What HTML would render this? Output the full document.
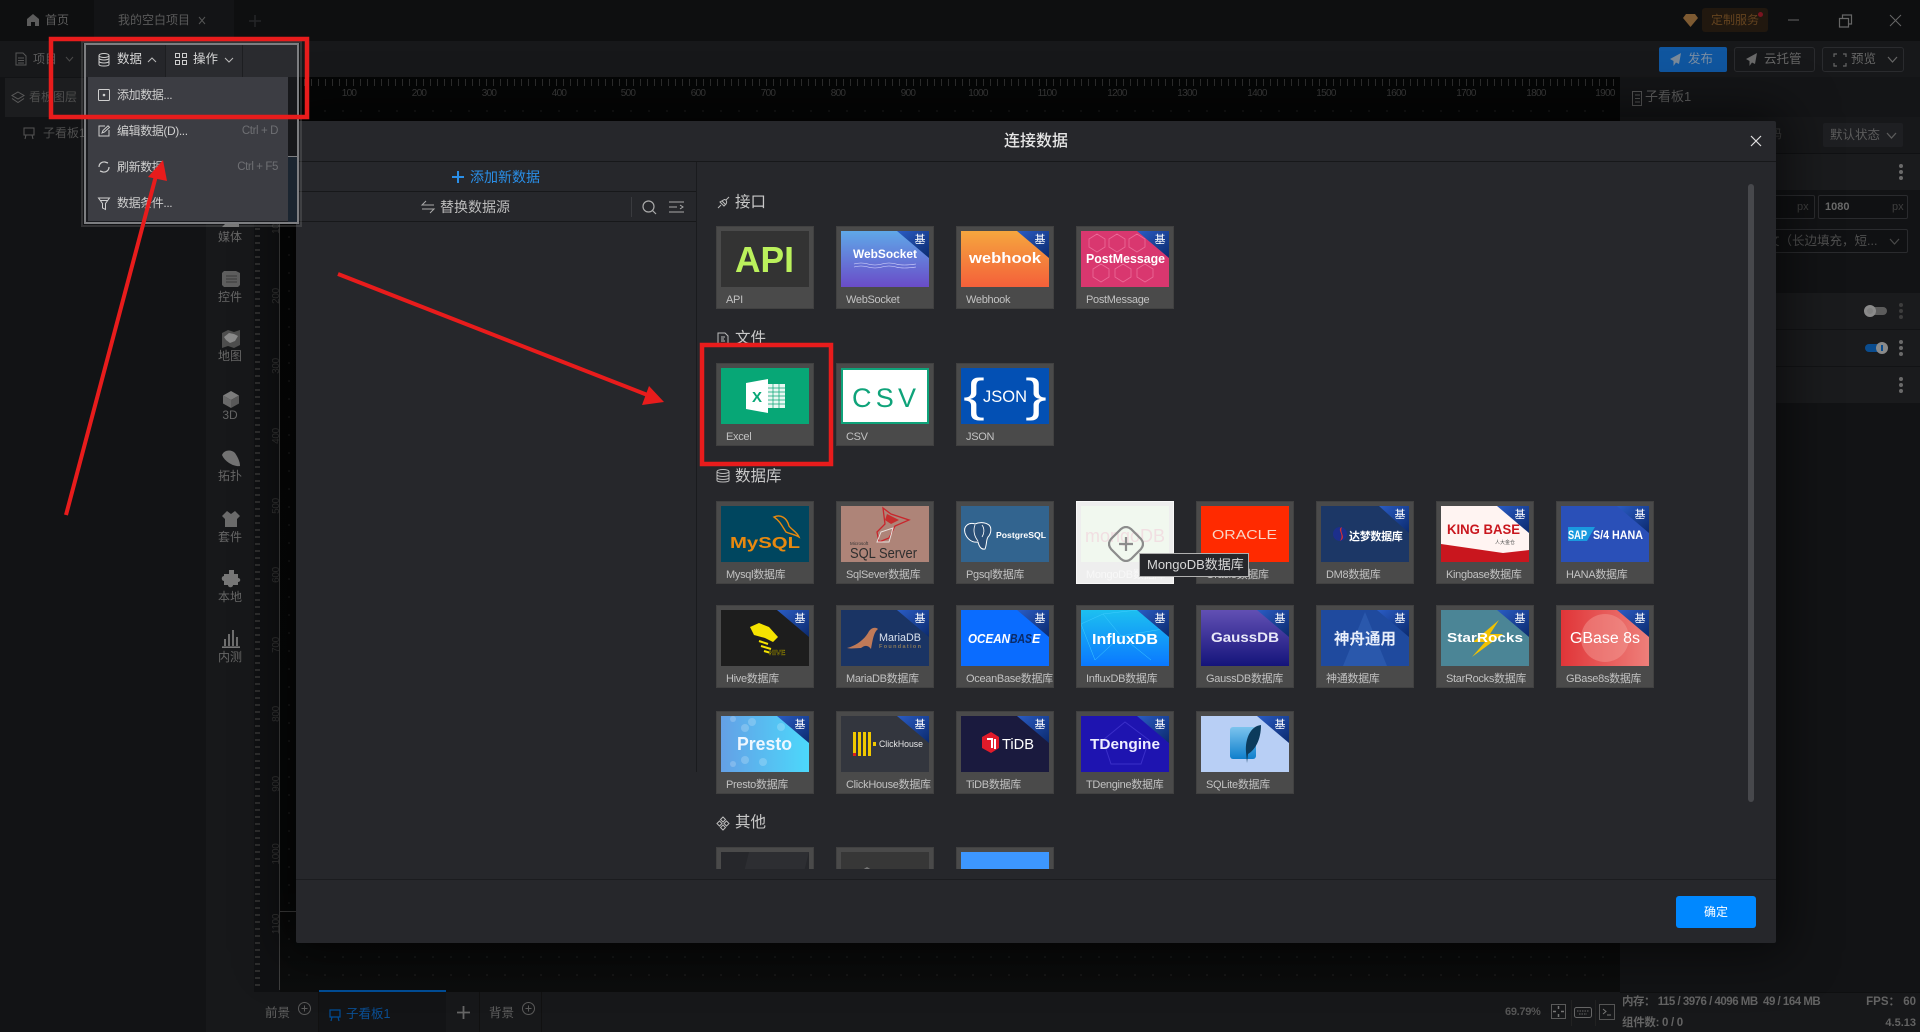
<!DOCTYPE html>
<html lang="zh"><head><meta charset="utf-8"><title>连接数据</title>
<style>
*{box-sizing:border-box;margin:0;padding:0}
html,body{width:1920px;height:1032px;overflow:hidden;background:#0a0b0c}
body{position:relative;font-family:"Liberation Sans","Noto Sans CJK SC",sans-serif;font-size:12px;color:#666}
.a{position:absolute;white-space:nowrap}
svg{position:absolute;overflow:visible}
.rl{position:absolute;top:88px;font-size:10px;letter-spacing:-.7px;color:#3c3c3c;width:30px;text-align:center}
.vl{position:absolute;left:262px;font-size:10px;letter-spacing:-.3px;color:#333;width:30px;height:12px;line-height:12px;text-align:center;transform:rotate(-90deg)}
.side{position:absolute;left:206px;width:48px;text-align:center;font-size:12px;line-height:16px;color:#666}
.mi{position:absolute;left:117px;font-size:12px;line-height:16px;color:#cfcfcf;white-space:nowrap;letter-spacing:-.4px}
.sc{position:absolute;right:1642px;font-size:11.5px;line-height:16px;color:#6e6f73;white-space:nowrap;letter-spacing:-.4px}
.sh{position:absolute;left:735px;font-size:15.5px;line-height:20px;color:#c8c8c8}
.k{position:absolute;width:98px;height:83px;background:#4a4a4a;border:1px solid #414141}
.k>svg{left:4px;top:4px;width:88px;height:56px;overflow:hidden}
.k>b{position:absolute;left:9px;top:66px;font-size:11px;line-height:14px;font-weight:400;color:#c2c2c2;white-space:nowrap;letter-spacing:-.3px}
.j{fill:url(#jg)}
.jt{font-size:11px;fill:#fff;font-family:"Noto Sans CJK SC",sans-serif}
.r{position:absolute;left:1620px;width:300px;background:#1a1b1d}
.kb{position:absolute;left:1899px;width:4px;height:4px;border-radius:2px;background:#6a6a6a;box-shadow:0 6px 0 #6a6a6a,0 12px 0 #6a6a6a}
</style></head>
<body>
<svg width="0" height="0" style="position:absolute"><defs>
<linearGradient id="jg" x1="0" y1="0" x2="1" y2="1"><stop offset="0" stop-color="#2a5cc4"/><stop offset="1" stop-color="#0b2a6e"/></linearGradient>
<linearGradient id="ws" x1="0" y1="0" x2="0" y2="1"><stop offset="0" stop-color="#5fa8e8"/><stop offset="1" stop-color="#6a4cc8"/></linearGradient>
<linearGradient id="wh" x1="0" y1="0" x2="0" y2="1"><stop offset="0" stop-color="#f5a63e"/><stop offset="1" stop-color="#f4603a"/></linearGradient>
<linearGradient id="if" x1="0" y1="0" x2="0" y2="1"><stop offset="0" stop-color="#1dc0f0"/><stop offset="1" stop-color="#0a78ff"/></linearGradient>
<linearGradient id="ga" x1="0" y1="0" x2="0" y2="1"><stop offset="0" stop-color="#6250b4"/><stop offset="1" stop-color="#14147a"/></linearGradient>
<linearGradient id="gb" x1="0" y1="0" x2="1" y2="0"><stop offset="0" stop-color="#e03538"/><stop offset="1" stop-color="#ee7f7a"/></linearGradient>
<linearGradient id="pr" x1="0" y1="0" x2="1" y2="0"><stop offset="0" stop-color="#64a0e6"/><stop offset="1" stop-color="#4cd8fb"/></linearGradient>
<linearGradient id="sq" x1="0" y1="0" x2="0" y2="1"><stop offset="0" stop-color="#7cc4ee"/><stop offset="1" stop-color="#0f7fcc"/></linearGradient>
</defs></svg>

<!-- title bar -->
<div class="a" style="left:0;top:0;width:1920px;height:41px;background:#0e0f10"></div>
<div class="a" style="left:94px;top:0;width:140px;height:41px;background:#131416"></div>
<svg style="left:26px;top:13px" width="14" height="14" viewBox="0 0 14 14"><path d="M7 1 L13 6 V13 H9 V9 H5 V13 H1 V6 Z" fill="#5c5c5c"/></svg>
<div class="a" style="left:45px;top:12px;line-height:16px;color:#5e5e5e">首页</div>
<div class="a" style="left:118px;top:12px;line-height:16px;color:#5a5a5a">我的空白项目</div>
<svg style="left:198px;top:16px" width="8" height="9"><path d="M1 1 L7 8 M7 1 L1 8" stroke="#555" fill="none"/></svg>
<svg style="left:249px;top:15px" width="12" height="12"><path d="M6 0 V12 M0 6 H12" stroke="#252628" stroke-width="1.5"/></svg>
<svg style="left:1683px;top:13px" width="15" height="14"><path d="M3 1 H12 L15 5 L7.500 14 L0 5 Z" fill="#7d5a32"/></svg>
<div class="a" style="left:1702px;top:8px;width:66px;height:24px;background:#21180f;border-radius:3px;color:#64431f;line-height:24px;padding-left:9px;font-size:12px">定制服务</div>
<div class="a" style="left:1758px;top:12px;width:5px;height:5px;border-radius:50%;background:#7a1420"></div>
<svg style="left:1788px;top:19px" width="12" height="2"><path d="M0 1 H11" stroke="#666"/></svg>
<svg style="left:1838px;top:14px" width="15" height="14"><path d="M1.500 4.500 H10.500 V13 H1.500 Z M4.500 4 V1 H13.500 V10 H11" stroke="#666" fill="none" stroke-width="1.200"/></svg>
<svg style="left:1889px;top:14px" width="13" height="13"><path d="M1 1 L12 12 M12 1 L1 12" stroke="#666" fill="none"/></svg>

<!-- toolbar -->
<div class="a" style="left:0;top:41px;width:1920px;height:36px;background:#17181a"></div>
<svg style="left:15px;top:52px" width="12" height="14"><path d="M1 1 H8 L11 4 V13 H1 Z M3 6 H9 M3 8.500 H9 M3 11 H9" stroke="#565656" fill="none"/></svg>
<div class="a" style="left:33px;top:51px;line-height:16px;color:#5c5c5c">项目</div>
<svg style="left:65px;top:56px" width="9" height="6"><path d="M1 1 L4.500 5 L8 1" stroke="#4a4a4a" fill="none"/></svg>
<div class="a" style="left:1659px;top:47px;width:68px;height:25px;background:#10569f;border-radius:2px;color:#7b8ea3;line-height:25px;padding-left:29px;font-size:12.500px">发布</div>
<svg style="left:1670px;top:53px" width="12" height="13"><path d="M11 0 L0 6 L3.500 8 L3.500 13 L6 9.500 L9 11 Z" fill="#7a8a9a"/></svg>
<div class="a" style="left:1734px;top:47px;width:81px;height:25px;border:1px solid #2a2b2e;border-radius:3px;color:#666;line-height:23px;padding-left:29px;font-size:12.500px">云托管</div>
<svg style="left:1746px;top:53px" width="12" height="13"><path d="M11 0 L0 6 L3.500 8 L3.500 13 L6 9.500 L9 11 Z" fill="#6a6a6a"/></svg>
<div class="a" style="left:1822px;top:47px;width:82px;height:25px;border:1px solid #2a2b2e;border-radius:3px;color:#666;line-height:23px;padding-left:28px;font-size:12.500px">预览</div>
<svg style="left:1834px;top:54px" width="12" height="12"><path d="M0 3 V0 H3 M9 0 H12 V3 M12 9 V12 H9 M3 12 H0 V9" stroke="#666" fill="none" stroke-width="1.200"/></svg>
<svg style="left:1887px;top:56px" width="11" height="7"><path d="M1 1 L5.500 6 L10 1" stroke="#666" fill="none" stroke-width="1.200"/></svg>

<!-- left panel -->
<div class="a" style="left:0;top:77px;width:206px;height:955px;background:#121315"></div>
<div class="a" style="left:5px;top:78px;width:85px;height:39px;background:#1c1d1f"></div>
<svg style="left:11px;top:91px" width="14" height="13"><path d="M7 1 L13 4.500 L7 8 L1 4.500 Z M1 7.500 L7 11.500 L13 7.500" stroke="#5a5a5a" fill="none"/></svg>
<div class="a" style="left:29px;top:89px;line-height:16px;color:#4e4e4e">看板图层</div>
<svg style="left:23px;top:127px" width="12" height="13"><path d="M1 1 H11 V8 H1 Z M3 8 L2 12 M9 8 L10 12" stroke="#555" fill="none"/></svg>
<div class="a" style="left:43px;top:125px;line-height:16px;color:#4f4f4f">子看板1</div>

<!-- sidebar -->
<div class="a" style="left:206px;top:77px;width:48px;height:955px;background:#17181a"></div>
<svg style="left:222px;top:221px" width="17" height="6"><path d="M0 6 L4 2 L7 3 L12 0 L17 1 V6 Z" fill="#777"/></svg>
<div class="side" style="top:229px">媒体</div>
<svg style="left:222px;top:271px" width="18" height="16"><path d="M2 0 H14 L18 2 V14 L16 16 H2 L0 14 V2 Z" fill="#5e5e5e"/><path d="M4 5 H15 M4 8 H15 M4 11 H15" stroke="#3a3a3a"/></svg>
<div class="side" style="top:289px">控件</div>
<svg style="left:222px;top:330px" width="18" height="18"><path d="M0 3 L6 0 L12 2 L18 0 V15 L12 18 L6 16 L0 18 Z" fill="#4e4e4e"/><path d="M2 7 L7 3 L12 4 L16 6 L13 11 L8 13 L4 10 Z" fill="#8a8a8a"/></svg>
<div class="side" style="top:348px">地图</div>
<svg style="left:223px;top:391px" width="16" height="17"><path d="M8 0 L16 4.500 L8 9 L0 4.500 Z" fill="#7d7d7d"/><path d="M0 4.500 L8 9 V17 L0 12.500 Z" fill="#6a6a6a"/><path d="M16 4.500 L8 9 V17 L16 12.500 Z" fill="#5a5a5a"/></svg>
<div class="side" style="top:407px">3D</div>
<svg style="left:222px;top:450px" width="18" height="17"><path d="M0 5 C2 0 9 -1 13 3 C15 6 18 11 18 16 C12 17 3 12 0 5 Z" fill="#737373"/></svg>
<div class="side" style="top:468px">拓扑</div>
<svg style="left:222px;top:511px" width="18" height="16"><path d="M5 0 L9 3 L13 0 L18 5 L15 8 V16 H3 V8 L0 5 Z" fill="#6b6b6b"/></svg>
<div class="side" style="top:529px">套件</div>
<svg style="left:222px;top:570px" width="18" height="17"><path d="M7 0 H12 V4 H16 V8 C19 8 19 12 16 12 V15 H11 C11 18 6 18 6 15 H2 V11 C-1 11 -1 6 2 6 V4 H7 Z" fill="#777"/></svg>
<div class="side" style="top:589px">本地</div>
<svg style="left:222px;top:630px" width="18" height="18"><path d="M2 9 H4 V16 H2 Z M6 4 H8 V16 H6 Z M10 0 H12 V16 H10 Z M14 7 H16 V16 H14 Z" fill="#6e6e6e"/><path d="M0 17.200 H18" stroke="#777" stroke-width="1.600"/></svg>
<div class="side" style="top:649px">内测</div>

<!-- vertical ruler -->
<div class="a" style="left:254px;top:77px;width:26px;height:915px;background:#101113"></div>
<div class="a" style="left:255px;top:81px;width:5px;height:909px;background:repeating-linear-gradient(180deg,#2e2e2e 0 2px,transparent 2px 7px)"></div>
<div class="a" style="left:279px;top:77px;width:1px;height:913px;background:#3e3e3e"></div>
<div class="vl" style="top:220px">100</div><div class="vl" style="top:290px">200</div><div class="vl" style="top:360px">300</div><div class="vl" style="top:430px">400</div><div class="vl" style="top:500px">500</div><div class="vl" style="top:569px">600</div><div class="vl" style="top:639px">700</div><div class="vl" style="top:708px">800</div><div class="vl" style="top:778px">900</div><div class="vl" style="top:848px">1000</div><div class="vl" style="top:918px">1100</div>

<!-- canvas + ruler -->
<div class="a" style="left:280px;top:77px;width:1340px;height:915px;background:linear-gradient(180deg,#050606 0,#060707 88%,#0c0d0d 100%)"></div>
<div class="a" style="left:280px;top:110px;width:1340px;height:882px;background:radial-gradient(circle at 1px 1px,#1c1d1d .7px,transparent 1.100px) 8px 0/18px 18px"></div>
<div class="a" style="left:290px;top:79px;width:1330px;height:7px;background:repeating-linear-gradient(90deg,#2e2e2e 0 1px,transparent 1px 7px)"></div>
<div class="rl" style="left:334px">100</div><div class="rl" style="left:404px">200</div><div class="rl" style="left:474px">300</div><div class="rl" style="left:544px">400</div><div class="rl" style="left:613px">500</div><div class="rl" style="left:683px">600</div><div class="rl" style="left:753px">700</div><div class="rl" style="left:823px">800</div><div class="rl" style="left:893px">900</div><div class="rl" style="left:963px">1000</div><div class="rl" style="left:1032px">1100</div><div class="rl" style="left:1102px">1200</div><div class="rl" style="left:1172px">1300</div><div class="rl" style="left:1242px">1400</div><div class="rl" style="left:1311px">1500</div><div class="rl" style="left:1381px">1600</div><div class="rl" style="left:1451px">1700</div><div class="rl" style="left:1521px">1800</div><div class="rl" style="left:1590px">1900</div>
<div class="a" style="left:280px;top:911px;width:16px;height:1px;background:#3e3e3e"></div>

<!-- right panel -->
<div class="a" style="left:1620px;top:77px;width:300px;height:915px;background:#121315"></div>
<div class="r" style="top:77px;height:40px;background:#141517"></div>
<svg style="left:1632px;top:91px" width="10" height="15"><path d="M.5 .5 H9.500 V14.500 H.5 Z M3 4 H8 M3 7.500 H8 M3 11 H8" stroke="#555" fill="none"/></svg>
<div class="a" style="left:1645px;top:89px;line-height:16px;color:#5f5f5f;font-size:13px">子看板1</div>
<div class="r" style="top:117px;height:36px;background:#17181a"></div>
<div class="a" style="left:1770px;top:126px;line-height:16px;color:#3f3f3f;font-size:12px">码</div>
<div class="a" style="left:1823px;top:123px;width:80px;height:24px;background:#1e1f22;border-radius:2px;line-height:24px;padding-left:7px;color:#5c5c5c;font-size:12.500px">默认状态</div>
<svg style="left:1886px;top:132px" width="11" height="7"><path d="M1 1 L5.500 6 L10 1" stroke="#5c5c5c" fill="none" stroke-width="1.300"/></svg>
<div class="r" style="top:153px;height:37px;background:#1a1b1d;border-top:1px solid #101113"></div>
<div class="kb" style="top:164px"></div>
<div class="a" style="left:1770px;top:195px;width:45px;height:24px;border:1px solid #2a2b2e;border-radius:2px;background:#101113"></div>
<div class="a" style="left:1797px;top:199px;line-height:16px;color:#3f3f3f;font-size:11px">px</div>
<div class="a" style="left:1818px;top:195px;width:90px;height:24px;border:1px solid #2a2b2e;border-radius:2px;background:#101113"></div>
<div class="a" style="left:1825px;top:199px;line-height:16px;color:#6a6a6a;font-weight:700;font-size:11px">1080</div>
<div class="a" style="left:1892px;top:199px;line-height:16px;color:#3f3f3f;font-size:11px">px</div>
<div class="a" style="left:1760px;top:229px;width:148px;height:24px;border:1px solid #2a2b2e;border-radius:2px;background:#101113"></div>
<div class="a" style="left:1767px;top:233px;line-height:16px;color:#4f4f4f;font-size:12.500px">文（长边填充，短...</div>
<svg style="left:1889px;top:238px" width="11" height="7"><path d="M1 1 L5.500 6 L10 1" stroke="#4a4a4a" fill="none" stroke-width="1.200"/></svg>
<div class="r" style="top:293px;height:36px"></div>
<div class="r" style="top:330px;height:36px"></div>
<div class="r" style="top:367px;height:36px"></div>
<div class="a" style="left:1866px;top:307px;width:21px;height:8px;border-radius:4px;background:#5c5c5c"></div>
<div class="a" style="left:1864px;top:305px;width:12px;height:12px;border-radius:50%;background:#808080;border:3px solid #8a8a8a"></div>
<div class="kb" style="top:303px;background:#3d3d3d;box-shadow:0 6px 0 #3d3d3d,0 12px 0 #3d3d3d"></div>
<div class="a" style="left:1865px;top:344px;width:20px;height:8px;border-radius:4px;background:#0a4c8e"></div>
<div class="a" style="left:1876px;top:342px;width:12px;height:12px;border-radius:50%;background:#8a8a8a"></div>
<div class="a" style="left:1881px;top:345px;width:2px;height:6px;background:#0a4c8e"></div>
<div class="kb" style="top:340px"></div>
<div class="kb" style="top:377px"></div>

<!-- bottom bar -->
<div class="a" style="left:254px;top:992px;width:1366px;height:40px;background:#17181a"></div>
<div class="a" style="left:319px;top:990px;width:127px;height:42px;background:#131416;border-top:2px solid #004e98"></div>
<div class="a" style="left:318px;top:992px;width:1px;height:40px;background:#111"></div>
<div class="a" style="left:479px;top:992px;width:1px;height:40px;background:#111"></div>
<div class="a" style="left:541px;top:992px;width:1px;height:40px;background:#111"></div>
<div class="a" style="left:265px;top:1005px;line-height:16px;color:#5f5f5f;font-size:12.500px">前景</div>
<svg style="left:298px;top:1002px" width="13" height="13"><circle cx="6.500" cy="6.500" r="6" stroke="#5a5a5a" fill="none"/><path d="M6.500 3.500 V9.500 M3.500 6.500 H9.500" stroke="#5a5a5a"/></svg>
<svg style="left:329px;top:1009px" width="12" height="13"><path d="M1 1 H11 V8 H1 Z M3 8 L2 12 M9 8 L10 12" stroke="#004e98" fill="none" stroke-width="1.200"/></svg>
<div class="a" style="left:346px;top:1006px;line-height:16px;color:#0a4f94;font-size:12.500px">子看板1</div>
<svg style="left:457px;top:1006px" width="13" height="13"><path d="M6.500 0 V13 M0 6.500 H13" stroke="#666" stroke-width="1.800"/></svg>
<div class="a" style="left:489px;top:1005px;line-height:16px;color:#5f5f5f;font-size:12.500px">背景</div>
<svg style="left:522px;top:1002px" width="13" height="13"><circle cx="6.500" cy="6.500" r="6" stroke="#5a5a5a" fill="none"/><path d="M6.500 3.500 V9.500 M3.500 6.500 H9.500" stroke="#5a5a5a"/></svg>
<div class="a" style="left:1505px;top:1004px;line-height:16px;color:#555;font-weight:700;font-size:11px;letter-spacing:-.3px">69.79%</div>
<svg style="left:1551px;top:1004px" width="15" height="15"><path d="M.5 .5 H14.500 V14.500 H.5 Z" stroke="#5a5a5a" fill="none"/><path d="M7.500 2 V5 M7.500 10 V13 M2 7.500 H5 M10 7.500 H13" stroke="#777" stroke-width="1.500"/></svg>
<div class="a" style="left:1571px;top:1000px;width:1px;height:26px;background:#222"></div>
<svg style="left:1574px;top:1007px" width="18" height="11"><rect x=".5" y=".5" width="17" height="10" rx="2" stroke="#666" fill="none"/><path d="M3 4 H15 M5 7 H13" stroke="#666" stroke-dasharray="1.500 1"/></svg>
<div class="a" style="left:1595px;top:1000px;width:1px;height:26px;background:#222"></div>
<svg style="left:1599px;top:1004px" width="16" height="16"><path d="M.5 .5 H15.500 V15.500 H.5 Z" stroke="#555" fill="none"/><path d="M4 5 L7 7.500 L4 10 M8 11 H12" stroke="#777" fill="none"/></svg>
<div class="a" style="left:1620px;top:992px;width:300px;height:40px;background:#17181a;border-top:1px solid #0e0f10"></div>
<div class="a" style="left:1622px;top:994px;line-height:16px;color:#636363;font-weight:700;font-size:11.500px;letter-spacing:-.5px">内存： 115 / 3976 / 4096 MB&nbsp; 49 / 164 MB</div>
<div class="a" style="left:1622px;top:1015px;line-height:16px;color:#636363;font-weight:700;font-size:11.500px;letter-spacing:-.3px">组件数: 0 / 0</div>
<div class="a" style="right:4px;top:994px;line-height:16px;color:#636363;font-weight:700;font-size:11.500px">FPS： 60</div>
<div class="a" style="right:4px;top:1015px;line-height:16px;color:#636363;font-weight:700;font-size:11px">4.5.13</div>

<!-- modal -->
<div class="a" style="left:296px;top:121px;width:1480px;height:822px;background:#26272b;border-radius:2px;box-shadow:0 0 50px 10px rgba(0,0,0,.55)"></div>
<div class="a" style="left:296px;top:161px;width:1480px;height:1px;background:#17181a"></div>
<div class="a" style="left:296px;top:879px;width:1480px;height:1px;background:#1b1c1f"></div>
<div class="a" style="left:1004px;top:132px;font-size:16px;line-height:20px;color:#e6e6e6;font-weight:500">连接数据</div>
<svg style="left:1750px;top:135px" width="12" height="12"><path d="M1 1 L11 11 M11 1 L1 11" stroke="#e0e0e0" fill="none" stroke-width="1.200"/></svg>
<div class="a" style="left:296px;top:191px;width:400px;height:1px;background:#17181a"></div>
<div class="a" style="left:296px;top:221px;width:400px;height:1px;background:#17181a"></div>
<div class="a" style="left:696px;top:162px;width:1px;height:610px;background:#1a1b1e"></div>
<svg style="left:452px;top:171px" width="12" height="12"><path d="M6 0 V12 M0 6 H12" stroke="#2a8fe8" stroke-width="2"/></svg>
<div class="a" style="left:470px;top:168px;font-size:14px;line-height:18px;color:#2a8fe8">添加新数据</div>
<svg style="left:421px;top:200px" width="14" height="14"><path d="M13 5 H1 L5 1 M1 9 H13 L9 13" stroke="#aaa" fill="none"/></svg>
<div class="a" style="left:440px;top:198px;font-size:14px;line-height:18px;color:#bdbdbd">替换数据源</div>
<div class="a" style="left:631px;top:197px;width:1px;height:20px;background:#3a3b3f"></div>
<svg style="left:642px;top:200px" width="15" height="15"><circle cx="6.500" cy="6.500" r="5.500" stroke="#aaa" fill="none" stroke-width="1.200"/><path d="M10.500 10.500 L14 14" stroke="#aaa" stroke-width="1.200"/></svg>
<svg style="left:669px;top:201px" width="16" height="12"><path d="M0 1 H15 M0 6 H8 M0 11 H15 M11 4 L14 6 L11 8" stroke="#aaa" fill="none"/></svg>
<div class="a" style="left:1748px;top:184px;width:6px;height:618px;background:#47484c;border-radius:3px"></div>

<!-- section heads -->
<div class="a" style="left:0;top:0;width:1920px;height:869px;overflow:hidden">
<svg style="left:717px;top:196px" width="13" height="13"><path d="M1 12 L4 9 M12 1 L9 4 M3 6 L7 10 L9 8 C10.500 6 9 3.500 7.500 3.500 Z M5 5 L8.500 8.500" stroke="#bbb" fill="none"/></svg>
<div class="sh" style="top:193px">接口</div>
<svg style="left:717px;top:332px" width="12" height="13"><path d="M1 1 H8 L11 4 V12 H1 Z" stroke="#bbb" fill="none"/><path d="M4 5 H8 M4 7 H7 M4 9 H8" stroke="#bbb"/></svg>
<div class="sh" style="top:329px">文件</div>
<svg style="left:716px;top:469px" width="14" height="14"><ellipse cx="7" cy="2.500" rx="6" ry="2" stroke="#bbb" fill="none"/><path d="M1 2.500 V11.500 C1 13.500 13 13.500 13 11.500 V2.500 M1 6 C3 8 11 8 13 6 M1 9 C3 11 11 11 13 9" stroke="#bbb" fill="none"/></svg>
<div class="sh" style="top:467px">数据库</div>
<svg style="left:716px;top:816px" width="14" height="15"><path d="M7 1 L9.500 3.500 L7 6 L4.500 3.500 Z M3.500 5 L6 7.500 L3.500 10 L1 7.500 Z M10.500 5 L13 7.500 L10.500 10 L8 7.500 Z M7 9 L9.500 11.500 L7 14 L4.500 11.500 Z" stroke="#bbb" fill="none"/></svg>
<div class="sh" style="top:813px">其他</div>

<!-- row 1 -->
<div class="k" style="left:716px;top:226px"><svg viewBox="0 0 88 56"><rect width="88" height="56" fill="#333"/><text x="14" y="41" font-size="36" font-weight="700" fill="#bbf15c" textLength="59" lengthAdjust="spacingAndGlyphs">API</text></svg><b>API</b></div>
<div class="k" style="left:836px;top:226px"><svg viewBox="0 0 88 56"><rect width="88" height="56" fill="url(#ws)"/><text x="12" y="27" font-size="12" font-weight="700" fill="#fff" textLength="64" lengthAdjust="spacingAndGlyphs">WebSocket</text><path d="M13 33 Q20 31 27 33 T41 33 T55 33 T75 33 M13 36 Q20 34 27 36 T41 36 T55 36 T75 36" stroke="#dcdcff" stroke-width=".6" fill="none"/><path class="j" d="M56 0 H88 V27 Z"/><text class="jt" x="79" y="12" text-anchor="middle">基</text></svg><b>WebSocket</b></div>
<div class="k" style="left:956px;top:226px"><svg viewBox="0 0 88 56"><rect width="88" height="56" fill="url(#wh)"/><text x="8" y="32" font-size="14.500" font-weight="700" fill="#fff" textLength="72" lengthAdjust="spacingAndGlyphs">webhook</text><path class="j" d="M56 0 H88 V27 Z"/><text class="jt" x="79" y="12" text-anchor="middle">基</text></svg><b>Webhook</b></div>
<div class="k" style="left:1076px;top:226px"><svg viewBox="0 0 88 56"><rect width="88" height="56" fill="#d9376f"/><path d="M8 8 L16 3 L24 8 V16 L16 21 L8 16 Z M28 8 L36 3 L44 8 V16 L36 21 L28 16 Z M48 8 L56 3 L64 8 V16 L56 21 L48 16 Z M12 38 L20 33 L28 38 V46 L20 51 L12 46 Z M34 38 L42 33 L50 38 V46 L42 51 L34 46 Z M56 38 L64 33 L72 38 V46 L64 51 L56 46 Z" fill="none" stroke="#ea6c98" stroke-width=".8"/><text x="5" y="32" font-size="13" font-weight="700" fill="#fff" textLength="79" lengthAdjust="spacingAndGlyphs">PostMessage</text><path class="j" d="M56 0 H88 V27 Z"/><text class="jt" x="79" y="12" text-anchor="middle">基</text></svg><b>PostMessage</b></div>

<!-- row 2 -->
<div class="k" style="left:716px;top:363px"><svg viewBox="0 0 88 56"><rect width="88" height="56" fill="#07a776"/><path d="M25 15 L47 11 V45 L25 41 Z" fill="#fff"/><path d="M47 16 H64 V40 H47 Z" fill="#e8f7f2"/><path d="M47 20 H64 M47 24 H64 M47 28 H64 M47 32 H64 M47 36 H64 M52 16 V40 M58 16 V40" stroke="#07a776" stroke-width=".7"/><text x="36" y="34" text-anchor="middle" font-size="15" font-weight="700" fill="#07a776">X</text></svg><b>Excel</b></div>
<div class="k" style="left:836px;top:363px"><svg viewBox="0 0 88 56"><rect width="88" height="56" fill="#0fa37a"/><rect x="2" y="2" width="84" height="52" fill="#fff"/><text x="11" y="39" font-size="27" fill="#0fa37a" textLength="64">CSV</text></svg><b>CSV</b></div>
<div class="k" style="left:956px;top:363px"><svg viewBox="0 0 88 56"><rect width="88" height="56" fill="#0350b4"/><text x="22" y="34" font-size="17" fill="#fff" textLength="44" lengthAdjust="spacingAndGlyphs">JSON</text><text transform="translate(13 43) scale(1.4 1)" text-anchor="middle" font-size="46" fill="#fff">{</text><text transform="translate(75 43) scale(1.4 1)" text-anchor="middle" font-size="46" fill="#fff">}</text></svg><b>JSON</b></div>

<!-- DB row 1 -->
<div class="k" style="left:716px;top:501px"><svg viewBox="0 0 88 56"><rect width="88" height="56" fill="#00465f"/><text x="9" y="42" font-size="16" font-weight="700" fill="#e8890f" textLength="70" lengthAdjust="spacingAndGlyphs">MySQL</text><path d="M53 11 C60 8 66 12 68 20 C71 24 76 26 78 31 C73 28 69 28 65 26 C61 20 59 15 53 11 Z" fill="none" stroke="#e8890f" stroke-width="1.400"/></svg><b>Mysql数据库</b></div>
<div class="k" style="left:836px;top:501px"><svg viewBox="0 0 88 56"><rect width="88" height="56" fill="#ae8478"/><path d="M42 2 L50 8 L68 14 L54 20 L48 32 L38 36 L36 26 L44 18 Z" fill="none" stroke="#c8262c" stroke-width="1.300"/><path d="M46 8 L58 14 L50 18 L44 14 Z" fill="#c62e2e"/><path d="M40 26 L52 22 L48 36 L36 36 Z" fill="none" stroke="#e6e0dc"/><text x="9" y="39" font-size="4.500" fill="#333">Microsoft</text><text x="9" y="52" font-size="14.500" fill="#2e2e2e" textLength="67" lengthAdjust="spacingAndGlyphs">SQL Server</text></svg><b>SqlSever数据库</b></div>
<div class="k" style="left:956px;top:501px"><svg viewBox="0 0 88 56"><rect width="88" height="56" fill="#32648f"/><path d="M4 27 C2 20 8 16 14 18 C18 16 24 16 28 19 C31 22 30 28 27 31 C25 34 26 38 24 43 C20 44 18 40 17 36 C11 37 6 33 4 27 Z" fill="#2a4f77" stroke="#fff" stroke-width="1"/><path d="M14 19 C12 24 13 30 17 35 M21 19 C24 23 23 28 21 31" stroke="#fff" fill="none" stroke-width=".8"/><text x="35" y="32" font-size="8.500" font-weight="700" fill="#fff" textLength="50" lengthAdjust="spacingAndGlyphs">PostgreSQL</text></svg><b>Pgsql数据库</b></div>
<div class="k" style="left:1076px;top:501px;background:#eeeeee;border-color:#f8f8f8"><svg viewBox="0 0 88 56"><rect width="88" height="56" fill="#f1f8ef"/><text x="44" y="36" text-anchor="middle" font-size="18" fill="#f1dfe2">mongoDB</text></svg><b style="color:#f8f8f8">MongoDB数据库</b>
<svg style="left:31px;top:24px;width:36px;height:36px" viewBox="0 0 36 36"><path d="M13 3 Q18 -1 23 3 L33 13 Q37 18 33 23 L23 33 Q18 37 13 33 L3 23 Q-1 18 3 13 Z" fill="none" stroke="#8c8c8c" stroke-width="2.200"/><path d="M18 11 V25 M11 18 H25" stroke="#8c8c8c" stroke-width="2.200"/></svg></div>
<div class="k" style="left:1196px;top:501px"><svg viewBox="0 0 88 56"><rect width="88" height="56" fill="#ff2a00"/><text x="11" y="33" font-size="13" fill="#f8d4c6" textLength="65" lengthAdjust="spacingAndGlyphs">ORACLE</text></svg><b>Oracle数据库</b></div>
<div class="k" style="left:1316px;top:501px"><svg viewBox="0 0 88 56"><rect width="88" height="56" fill="#1c3766"/><circle cx="19" cy="28" r="7" fill="#1c2f8c"/><path d="M21 21 C15 24 24 28 19 35 C26 31 18 27 21 21 Z" fill="#d92f2f"/><text x="28" y="34" font-size="11" font-weight="700" fill="#fff" font-family="Noto Sans CJK SC,sans-serif" letter-spacing="-.3">达梦数据库</text><path class="j" d="M58 0 H88 V27 Z"/><text class="jt" x="79" y="12" text-anchor="middle">基</text></svg><b>DM8数据库</b></div>
<div class="k" style="left:1436px;top:501px"><svg viewBox="0 0 88 56"><rect width="88" height="56" fill="#fff4f2"/><path d="M0 38 L62 47 L88 44 V56 H0 Z" fill="#c9161e"/><text x="6" y="28" font-size="13.500" font-weight="700" fill="#c9161e" textLength="73" lengthAdjust="spacingAndGlyphs">KING BASE</text><text x="64" y="38" text-anchor="middle" font-size="5" fill="#555" font-family="Noto Sans CJK SC,sans-serif">人大金仓</text><path class="j" d="M56 0 H88 V27 Z"/><text class="jt" x="79" y="12" text-anchor="middle">基</text></svg><b>Kingbase数据库</b></div>
<div class="k" style="left:1556px;top:501px"><svg viewBox="0 0 88 56"><rect width="88" height="56" fill="#2a50b8"/><path d="M7 21 H34 L26 35 H7 Z" fill="#1a9adf"/><text x="7" y="33" font-size="11.500" font-weight="700" fill="#fff" textLength="19" lengthAdjust="spacingAndGlyphs">SAP</text><text x="32" y="33" font-size="12" font-weight="700" fill="#fff" textLength="50" lengthAdjust="spacingAndGlyphs">S/4 HANA</text><path class="j" d="M56 0 H88 V27 Z"/><text class="jt" x="79" y="12" text-anchor="middle">基</text></svg><b>HANA数据库</b></div>

<!-- DB row 2 -->
<div class="k" style="left:716px;top:605px"><svg viewBox="0 0 88 56"><rect width="88" height="56" fill="#1d1d1d"/><path d="M29 17 L38 13 L48 17 L57 27 L52 32 L44 28 L33 25 Z" fill="#f5e300"/><path d="M38 31 L47 34 M40 36 L50 39 M43 41 L50 43" stroke="#f5e300" stroke-width="2"/><text x="48" y="45" font-size="7" font-weight="700" fill="#111" stroke="#b8a800" stroke-width=".3">HIVE</text><path class="j" d="M56 0 H88 V27 Z"/><text class="jt" x="79" y="12" text-anchor="middle">基</text></svg><b>Hive数据库</b></div>
<div class="k" style="left:836px;top:605px"><svg viewBox="0 0 88 56"><rect width="88" height="56" fill="#1a3464"/><path d="M6 38 C14 36 22 31 27 23 C30 17 35 17 37 19 C33 22 32 28 30 39 C27 35 24 35 20 38 C15 38 10 39 6 38 Z" fill="#c07a58"/><text x="38" y="31" font-size="11" fill="#dce3ee" textLength="42" lengthAdjust="spacingAndGlyphs">MariaDB</text><text x="38" y="38" font-size="5.500" font-weight="700" fill="#8a7a5a" textLength="42">Foundation</text><path class="j" d="M56 0 H88 V27 Z"/><text class="jt" x="79" y="12" text-anchor="middle">基</text></svg><b>MariaDB数据库</b></div>
<div class="k" style="left:956px;top:605px"><svg viewBox="0 0 88 56"><rect width="88" height="56" fill="#0a6cff"/><text x="7" y="33" font-size="12.500" font-weight="700" font-style="italic" fill="#fff" textLength="42" lengthAdjust="spacingAndGlyphs">OCEAN</text><text x="49" y="33" font-size="12.500" font-weight="700" font-style="italic" fill="#0b2a66" textLength="22" lengthAdjust="spacingAndGlyphs">BAS</text><text x="71" y="33" font-size="12.500" font-weight="700" font-style="italic" fill="#fff">E</text><path class="j" d="M56 0 H88 V27 Z"/><text class="jt" x="79" y="12" text-anchor="middle">基</text></svg><b>OceanBase数据库</b></div>
<div class="k" style="left:1076px;top:605px"><svg viewBox="0 0 88 56"><rect width="88" height="56" fill="url(#if)"/><path d="M0 14 L22 4 L40 26 L14 50 L0 14 M40 26 L70 50 M22 4 L56 0 M40 26 L88 18" stroke="#3ecbff" stroke-width=".5" fill="none"/><text x="11" y="34" font-size="15" font-weight="700" fill="#fff" textLength="66" lengthAdjust="spacingAndGlyphs">InfluxDB</text><path class="j" d="M56 0 H88 V27 Z"/><text class="jt" x="79" y="12" text-anchor="middle">基</text></svg><b>InfluxDB数据库</b></div>
<div class="k" style="left:1196px;top:605px"><svg viewBox="0 0 88 56"><rect width="88" height="56" fill="url(#ga)"/><text x="10" y="32" font-size="14" font-weight="700" fill="#e8e8f8" textLength="68" lengthAdjust="spacingAndGlyphs">GaussDB</text><path class="j" d="M56 0 H88 V27 Z"/><text class="jt" x="79" y="12" text-anchor="middle">基</text></svg><b>GaussDB数据库</b></div>
<div class="k" style="left:1316px;top:605px"><svg viewBox="0 0 88 56"><rect width="88" height="56" fill="#1f4a9e"/><path d="M44 2 L66 56 H22 Z" fill="#2a58ac"/><text x="44" y="34" text-anchor="middle" font-size="15.500" font-weight="700" fill="#e8eefa" font-family="Noto Sans CJK SC,sans-serif">神舟通用</text><path class="j" d="M56 0 H88 V27 Z"/><text class="jt" x="79" y="12" text-anchor="middle">基</text></svg><b>神通数据库</b></div>
<div class="k" style="left:1436px;top:605px"><svg viewBox="0 0 88 56"><rect width="88" height="56" fill="#4b8596"/><path d="M58 10 L32 32 L44 32 L31 47 L62 24 L49 24 Z" fill="#f2c200"/><text x="6" y="32" font-size="12.500" font-weight="700" fill="#fff" textLength="76" lengthAdjust="spacingAndGlyphs">StarRocks</text><path class="j" d="M56 0 H88 V27 Z"/><text class="jt" x="79" y="12" text-anchor="middle">基</text></svg><b>StarRocks数据库</b></div>
<div class="k" style="left:1556px;top:605px"><svg viewBox="0 0 88 56"><rect width="88" height="56" fill="url(#gb)"/><circle cx="44" cy="28" r="24" fill="#f4a09a" opacity=".45"/><text x="9" y="33" font-size="15.500" fill="#fff" textLength="70" lengthAdjust="spacingAndGlyphs">GBase 8s</text><path class="j" d="M56 0 H88 V27 Z"/><text class="jt" x="79" y="12" text-anchor="middle">基</text></svg><b>GBase8s数据库</b></div>

<!-- DB row 3 -->
<div class="k" style="left:716px;top:711px"><svg viewBox="0 0 88 56"><rect width="88" height="56" fill="url(#pr)"/><g fill="#fff" opacity=".2"><circle cx="12" cy="3" r="3"/><circle cx="31" cy="6" r="4"/><circle cx="60" cy="11" r="4"/><circle cx="24" cy="12" r="4"/><circle cx="12" cy="48" r="3"/><circle cx="42" cy="46" r="4"/><circle cx="24" cy="44" r="4"/></g><text x="16" y="34" font-size="18" font-weight="700" fill="#eef7ff" textLength="55" lengthAdjust="spacingAndGlyphs">Presto</text><path class="j" d="M56 0 H88 V27 Z"/><text class="jt" x="79" y="12" text-anchor="middle">基</text></svg><b>Presto数据库</b></div>
<div class="k" style="left:836px;top:711px"><svg viewBox="0 0 88 56"><rect width="88" height="56" fill="#33363e"/><path d="M12 16 H15 V40 H12 Z M17 16 H20 V40 H17 Z M22 16 H25 V40 H22 Z M27 16 H30 V40 H27 Z" fill="#f0c800"/><rect x="12" y="37" width="3" height="3" fill="#d8201c"/><rect x="32" y="26" width="3" height="4" fill="#f0c800"/><text x="38" y="31" font-size="9.500" fill="#e6e6e6" textLength="44" lengthAdjust="spacingAndGlyphs">ClickHouse</text><path class="j" d="M56 0 H88 V27 Z"/><text class="jt" x="79" y="12" text-anchor="middle">基</text></svg><b>ClickHouse数据库</b></div>
<div class="k" style="left:956px;top:711px"><svg viewBox="0 0 88 56"><rect width="88" height="56" fill="#1a1a3e"/><path d="M30 16 L38 21 V32 L30 37 L21 32 V21 Z" fill="#e21b2a"/><path d="M26 23 H31 V32 M34 23 V33" stroke="#fff" stroke-width="2" fill="none"/><text x="41" y="33" font-size="15" fill="#fff" textLength="32" lengthAdjust="spacingAndGlyphs">TiDB</text><path class="j" d="M56 0 H88 V27 Z"/><text class="jt" x="79" y="12" text-anchor="middle">基</text></svg><b>TiDB数据库</b></div>
<div class="k" style="left:1076px;top:711px"><svg viewBox="0 0 88 56"><rect width="88" height="56" fill="#1e14b0"/><path d="M44 6 L68 24 L60 48 L30 48 L22 24 Z" stroke="#3a2fc8" fill="none"/><text x="9" y="33" font-size="15" font-weight="700" fill="#eef" textLength="70" lengthAdjust="spacingAndGlyphs">TDengine</text><path class="j" d="M56 0 H88 V27 Z"/><text class="jt" x="79" y="12" text-anchor="middle">基</text></svg><b>TDengine数据库</b></div>
<div class="k" style="left:1196px;top:711px"><svg viewBox="0 0 88 56"><rect width="88" height="56" fill="#b8cff5"/><rect x="29" y="11" width="26" height="32" rx="3" fill="url(#sq)"/><path d="M60 9 C50 10 44 22 45 36 L46 47 L47 38 C54 34 60 24 60 9 Z" fill="#0c3b5c"/><path class="j" d="M56 0 H88 V27 Z"/><text class="jt" x="79" y="12" text-anchor="middle">基</text></svg><b>SQLite数据库</b></div>

<!-- other row -->
<div class="k" style="left:716px;top:847px"><svg viewBox="0 0 88 56"><rect width="88" height="56" fill="#26272b"/><path d="M14 56 L28 0 H88 L74 56 Z" fill="#2d2e32"/><rect x="32" y="17" width="20" height="6" fill="#6e3a26"/></svg></div>
<div class="k" style="left:836px;top:847px"><svg viewBox="0 0 88 56"><rect width="88" height="56" fill="#373737"/><path d="M18 20 L26 15 L34 20 Z" fill="#777"/><rect x="40" y="17" width="30" height="3" fill="#777"/></svg></div>
<div class="k" style="left:956px;top:847px"><svg viewBox="0 0 88 56"><rect width="88" height="56" fill="#3d97ff"/><path d="M8 20 L14 24 L20 22" stroke="#eaf4ff" stroke-width="1.500" fill="none"/></svg></div>
</div>

<!-- tooltip -->
<div class="a" style="left:1139px;top:553px;width:110px;height:24px;border:1px solid #b0b0b0;font-size:13px;line-height:22px;color:#d8d8d8;padding-left:7px;background:#26272b">MongoDB数据库</div>

<!-- confirm -->
<div class="a" style="left:1676px;top:896px;width:80px;height:32px;background:#0088ff;border-radius:3px;color:#fff;font-size:12px;line-height:32px;text-align:center">确定</div>

<!-- highlighted menu -->
<div class="a" style="left:81px;top:41px;width:221px;height:186px;border:2px solid rgba(130,130,130,.28)"></div>
<div class="a" style="left:84px;top:43px;width:215px;height:181px;border:2px solid #7d7e81;background:#1a1b1f"></div>
<div class="a" style="left:86px;top:45px;width:211px;height:32px;background:#2a2b2f"></div>
<div class="a" style="left:86px;top:45px;width:79px;height:32px;background:#25262a"></div>
<div class="a" style="left:165px;top:45px;width:1px;height:32px;background:#1d1e21"></div>
<div class="a" style="left:242px;top:45px;width:1px;height:32px;background:#1d1e21"></div>
<div class="a" style="left:288px;top:77px;width:9px;height:80px;background:#17181b"></div>
<div class="a" style="left:288px;top:157px;width:9px;height:65px;background:#1b2530"></div>
<div class="a" style="left:288px;top:156px;width:9px;height:1px;background:#7d7e81"></div>
<div class="a" style="left:88px;top:77px;width:200px;height:144px;background:#3c3d43"></div>
<svg style="left:98px;top:53px" width="12" height="14"><ellipse cx="6" cy="2.500" rx="5" ry="2" stroke="#cfcfcf" fill="none"/><path d="M1 2.500 V11.500 C1 13.500 11 13.500 11 11.500 V2.500 M1 5.500 C3 7.500 9 7.500 11 5.500 M1 8.500 C3 10.500 9 10.500 11 8.500" stroke="#cfcfcf" fill="none"/></svg>
<div class="a" style="left:117px;top:51px;line-height:16px;color:#d6d6d6;font-size:12.500px">数据</div>
<svg style="left:147px;top:57px" width="10" height="6"><path d="M1 5 L5 1 L9 5" stroke="#bbb" fill="none"/></svg>
<svg style="left:175px;top:53px" width="12" height="12"><path d="M.5 .5 H4.500 V4.500 H.5 Z M7.500 .5 H11.500 V4.500 H7.500 Z M.5 7.500 H4.500 V11.500 H.5 Z M7.500 7.500 H11.500 V11.500 H7.500 Z" stroke="#cfcfcf" fill="none"/></svg>
<div class="a" style="left:193px;top:51px;line-height:16px;color:#d6d6d6;font-size:12.500px">操作</div>
<svg style="left:224px;top:57px" width="10" height="6"><path d="M1 1 L5 5 L9 1" stroke="#bbb" fill="none"/></svg>
<svg style="left:98px;top:89px" width="12" height="12"><rect x=".5" y=".5" width="11" height="11" rx="1" stroke="#cfcfcf" fill="none"/><circle cx="6" cy="6" r="1.300" fill="#cfcfcf"/></svg>
<div class="mi" style="top:87px">添加数据...</div>
<svg style="left:98px;top:125px" width="12" height="12"><path d="M7 1 H1 V11 H11 V5" stroke="#cfcfcf" fill="none"/><path d="M4 8 L5 5.500 L10 .8 L11.500 2.300 L6.500 7 Z" stroke="#cfcfcf" fill="none"/></svg>
<div class="mi" style="top:123px">编辑数据(D)...</div>
<div class="sc" style="top:123px">Ctrl + D</div>
<svg style="left:98px;top:161px" width="12" height="12"><path d="M1 6 C1 2.500 4 .5 7 1 M11 6 C11 9.500 8 11.500 5 11 M7 1 L10 2 M5 11 L2 10" stroke="#cfcfcf" fill="none" stroke-width="1.200"/></svg>
<div class="mi" style="top:159px">刷新数据</div>
<div class="sc" style="top:159px">Ctrl + F5</div>
<svg style="left:98px;top:197px" width="12" height="13"><path d="M.5 1 H11.500 L7.500 6.500 V12.500 L4.500 11 V6.500 Z M2.500 3.500 H9.500" stroke="#cfcfcf" fill="none"/></svg>
<div class="mi" style="top:195px">数据条件...</div>

<!-- annotations -->
<svg style="left:0;top:0;pointer-events:none" width="1920" height="1032">
<rect x="51" y="39" width="256" height="78" fill="none" stroke="#e81c1c" stroke-width="4.500"/>
<rect x="702" y="345" width="129" height="119" fill="none" stroke="#e81c1c" stroke-width="4.500"/>
<path d="M66 515 L157 172" stroke="#e81c1c" stroke-width="4"/>
<path d="M163 160 L148 177 L167 181 Z" fill="#e81c1c"/>
<path d="M338 274 L650 396" stroke="#e81c1c" stroke-width="4"/>
<path d="M664 402 L649 386 L642 405 Z" fill="#e81c1c"/>
</svg>
</body></html>
